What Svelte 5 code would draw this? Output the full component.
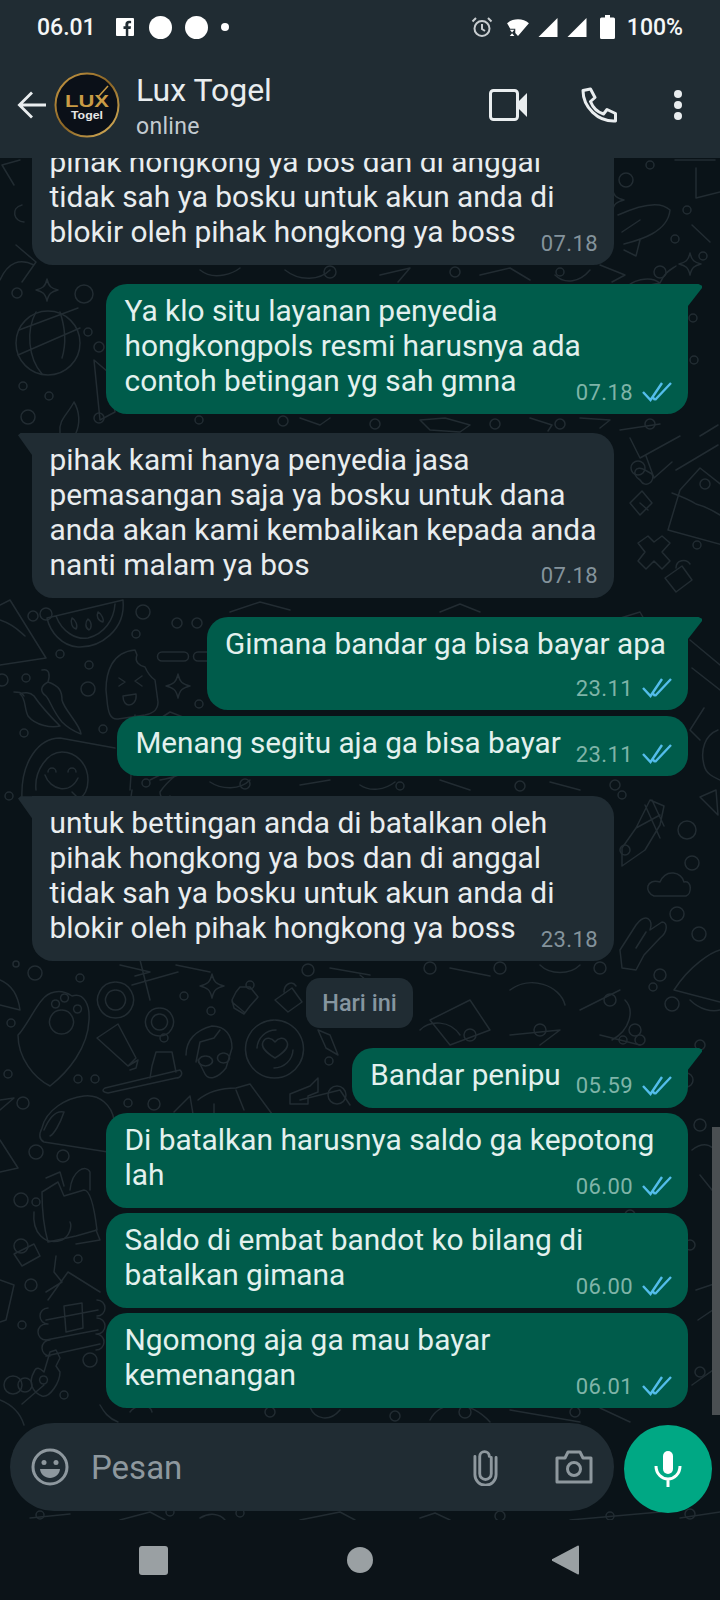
<script>
  const messages = [
    { who: 'in', tail: true, meta: 'stack', cut: true, time: '07.18', text: 'pihak hongkong ya bos dan di anggal\ntidak sah ya bosku untuk akun anda di\nblokir oleh pihak hongkong ya boss' },
    { who: 'out', tail: true, meta: 'stack', time: '07.18', gap: 'g19', text: 'Ya klo situ layanan penyedia\nhongkongpols resmi harusnya ada\ncontoh betingan yg sah gmna' },
    { who: 'in', tail: true, meta: 'stack', time: '07.18', gap: 'g19', text: 'pihak kami hanya penyedia jasa\npemasangan saja ya bosku untuk dana\nanda akan kami kembalikan kepada anda\nnanti malam ya bos' },
    { who: 'out', tail: true, meta: 'below', time: '23.11', gap: 'g19', text: 'Gimana bandar ga bisa bayar apa' },
    { who: 'out', meta: 'inline', time: '23.11', gap: 'g6', text: 'Menang segitu aja ga bisa bayar' },
    { who: 'in', tail: true, meta: 'stack', time: '23.18', gap: 'g20', text: 'untuk bettingan anda di batalkan oleh\npihak hongkong ya bos dan di anggal\ntidak sah ya bosku untuk akun anda di\nblokir oleh pihak hongkong ya boss' },
    { chip: 'Hari ini' },
    { who: 'out', tail: true, meta: 'inline', time: '05.59', gap: 'g20', text: 'Bandar penipu' },
    { who: 'out', meta: 'stack', time: '06.00', gap: 'g5', text: 'Di batalkan harusnya saldo ga kepotong\nlah' },
    { who: 'out', meta: 'stack', time: '06.00', gap: 'g5', text: 'Saldo di embat bandot ko bilang di\nbatalkan gimana' },
    { who: 'out', meta: 'stack', time: '06.01', gap: 'g5', text: 'Ngomong aja ga mau bayar\nkemenangan' }
  ];

  const star = (x, y, r) =>
    `M${x} ${y - r}C${x + r * 0.15} ${y - r * 0.3} ${x + r * 0.4} ${y - r * 0.15} ${x + r} ${y}C${x + r * 0.4} ${y + r * 0.15} ${x + r * 0.15} ${y + r * 0.3} ${x} ${y + r}C${x - r * 0.15} ${y + r * 0.3} ${x - r * 0.4} ${y + r * 0.15} ${x - r} ${y}C${x - r * 0.4} ${y - r * 0.15} ${x - r * 0.15} ${y - r * 0.3} ${x} ${y - r}Z`;

  const rings = [
    [17,293,5],[84,294,9],[88,332,4],[99,347,5],[23,386,4],[49,396,4],[28,417,7],[199,420,4],[283,421,5],[99,418,5],
    [46,614,6],[33,616,5],[143,612,7],[136,634,4],[60,654,4],[89,665,4],[88,689,7],[26,678,4],[2,680,6],[177,623,5],[197,623,5],[199,704,4],[103,729,4],[24,733,4],[146,783,4],[9,796,4],
    [16,964,3],[35,973,7],[80,978,4],[11,1023,4],[184,996,4],[211,1011,4],[164,1038,4],[95,1079,4],[8,1074,4],[78,1079,4],[23,1103,6],[128,1103,4],[154,1104,6],[36,1152,7],[63,1156,6],[36,1202,4],[21,1200,7],[21,1246,7],[31,1285,6],[78,1259,4],[22,1325,4],[25,1385,7],[90,1360,7],[64,1395,4],[13,1385,9],[112,1360,4],[329,1061,4],[337,1095,9],
    [626,180,7],[650,165,4],[687,210,4],[675,239,4],[703,256,4],[693,318,4],[694,360,4],[697,545,4],
    [638,468,7],[705,484,5],[622,795,4],[687,830,9],[692,863,7],[677,914,7],[699,934,7],[653,987,4],[672,1004,7],[625,850,5],
    [640,1040,5],[700,1045,5],[686,1080,7],[650,1090,6],[623,1040,4],[700,1125,6],[655,1165,4],[630,1215,5],[690,1245,5],[660,1330,4],[700,1372,5],[640,1400,4],[575,1412,5],[465,1412,6],[395,1416,5],[270,1412,5],
    [240,1513,4],[170,1512,4],[40,1515,4],[500,1516,5],[610,1516,4],[690,1514,5],
    [330,272,6],[455,272,5],[560,272,4],[660,272,6],[375,424,5],[495,424,5],[560,424,5],[650,424,5],
    [245,784,5],[400,786,4],[520,786,5],[615,785,5],[308,970,6],[430,968,6],[500,968,6],[600,968,6],[660,975,6],[610,1000,6],[470,1035,6],[540,1030,6],[635,1030,6],[250,985,4]
  ];

  const stars = [[47,290,11],[178,686,12],[212,986,12],[612,200,12],[690,264,11]].map((s) => star(s[0], s[1], s[2]));

  const doodles = [
    // globe
    'M19 330L78 308M18 355L80 328M36 312C26 330 28 358 42 374M60 312C66 330 66 345 62 358',
    // flag and flame by the first bubbles
    'M94 360L100 420L115 412L108 372Z',
    'M20 160L2 165L14 185',
    'M22 205C10 208 14 222 24 222',
    'M34 265C20 258 8 262 0 280M16 245L36 262L22 282',
    'M60 433C58 420 68 414 74 402C80 412 80 424 76 433',
    // fish, magnifier
    'M618 215C640 205 660 200 670 210C668 232 640 240 624 244M622 232L640 220M624 250L636 256L640 240',
    'M692 225L710 242',
    'M675 160L715 160M696 168L696 198L720 192',
    'M625 290C630 280 650 275 660 283C665 272 670 270 676 266M625 290L660 283',
    // watermelon
    'M47 618L123 600C126 630 100 648 78 647C62 646 50 632 47 618ZM56 616C62 632 76 640 88 638C104 634 114 620 115 604',
    'M72 618C76 620 78 626 76 629C72 628 70 622 72 618ZM88 619C92 622 92 628 89 630C85 628 85 622 88 619ZM98 612C102 614 104 620 103 622C98 621 96 616 98 612Z',
    'M0 605L10 600L46 658L0 665M0 620C15 625 20 632 25 636',
    // popsicle
    'M106 690C106 672 112 652 135 650L137 655C134 662 140 666 145 667C148 674 152 678 155 680L158 702C158 712 150 714 145 715L118 719C110 720 108 712 107 700Z',
    'M119 678L125 682L119 686M142 676L135 681L142 686M123 696L136 694C137 702 132 705 129 705C126 705 123 702 123 696Z',
    'M162 652L184 652A4.5 4.5 0 0 1 184 661L162 661A4.5 4.5 0 0 1 162 652ZM198 652L210 652M198 661L210 661M198 652A4.5 4.5 0 0 0 198 661',
    // chilies
    'M20 694C26 698 24 708 28 716C36 726 52 728 60 726C50 716 38 702 34 696C30 692 24 692 20 694Z',
    'M14 692C18 692 22 692 24 696M42 670C50 668 50 676 48 682C40 686 40 692 46 696C50 700 52 710 62 722C70 730 76 732 81 734C80 724 64 710 62 700C62 692 60 686 48 682',
    // smiley
    'M22 800C20 760 40 738 60 738L115 748',
    'M36 790C34 770 48 752 62 752C76 752 88 764 88 780C88 790 84 796 80 798',
    'M45 775C50 790 70 795 78 778M48 772A4 4 0 0 1 56 772M68 772A4 4 0 0 1 76 772M72 792L80 800',
    'M132 790L130 804M160 780C172 778 184 774 188 768C182 770 168 780 160 792C160 798 164 800 170 796',
    // paw shield
    'M18 1035C24 1030 36 1006 42 1000C48 992 60 988 72 996C84 992 90 1005 89 1020C88 1048 68 1072 50 1086C34 1078 18 1058 18 1035Z',
    'M62 1010A12 12 0 1 1 61 1010',
    'M56 1000A4 4 0 1 1 55 1000M65 994A4 4 0 1 1 64 994M78 1005A4 4 0 1 1 77 1005',
    'M0 980C12 985 18 995 20 1010L0 1005',
    // scissors
    'M116 982A18 18 0 1 1 115 982M116 990A10 10 0 1 1 115 990M132 985L178 972M140 960L150 1000M160 1008A14 14 0 1 1 159 1008M160 1014A8 8 0 1 1 159 1014',
    // plus, lock
    'M240 987L250 987L258 997L250 1006L244 1014L234 1008L232 1000L236 992Z M232 1002L244 1012',
    'M275 1000L292 988L302 1002L288 1012ZM284 992C284 984 292 980 296 986',
    // tube, brush
    'M97 1038L118 1024L136 1058L128 1066ZM128 1066L138 1060L136 1068L130 1070',
    'M105 1088L180 1070C184 1074 180 1078 176 1078L108 1093C102 1092 102 1090 105 1088ZM150 1078L152 1066L156 1052L172 1052L176 1072',
    // person
    'M198 1100C210 1090 225 1088 236 1088L250 1084L272 1114M186 1055C186 1040 196 1030 212 1026C226 1026 232 1036 232 1048L226 1068C218 1078 208 1082 204 1072L198 1060',
    'M196 1062L200 1042L214 1038L220 1030M206 1056A7 5 0 1 1 205 1056M224 1053A6 5 0 1 1 223 1053M236 1090L244 1110M214 1104L214 1120M174 1112L190 1096M190 1096L194 1120',
    // heart coffee
    'M275 1020A29 29 0 1 1 274 1020M257 1048A19 19 0 0 1 276 1030M293 1050A19 19 0 0 1 274 1068',
    'M275 1058C265 1052 261 1046 263 1042C266 1036 272 1038 275 1042C278 1038 284 1036 287 1042C289 1046 285 1052 275 1058Z',
    'M290 1094L310 1086L318 1078L318 1092L308 1096L308 1104L290 1104Z',
    'M318 1030L330 1035L338 1055L326 1048Z',
    // taco
    'M42 1128C46 1110 66 1098 84 1096C100 1094 112 1106 114 1120M42 1128C38 1136 40 1140 44 1142L108 1152',
    'M44 1130C50 1116 56 1110 64 1112C60 1124 54 1134 50 1136',
    'M0 1140L18 1168L0 1172M0 1100L14 1098L0 1110',
    // grocery bag
    'M42 1192L58 1182L64 1196L84 1190C90 1190 94 1205 97 1230L76 1236L48 1242C44 1228 42 1206 42 1192ZM46 1178L60 1172L64 1186M70 1190C72 1170 86 1164 90 1172L90 1190',
    'M34 1212C32 1232 44 1246 62 1240C70 1236 72 1226 70 1222M96 1230L100 1240L76 1244',
    // folder, log house
    'M14 1254L34 1244L40 1256L22 1266Z',
    'M56 1256L54 1272L62 1282L46 1292M48 1300L68 1272L100 1292M46 1320L98 1310M46 1340L98 1330M46 1356L100 1344M64 1306L82 1303L83 1328L66 1332Z',
    'M48 1308A8 8 0 1 0 48 1324M46 1324A8 8 0 1 0 46 1340M50 1340A8 8 0 1 0 50 1356M97 1300A8 8 0 1 1 97 1316M97 1318A8 8 0 1 1 97 1334M96 1334A8 8 0 1 1 96 1350',
    'M0 1280L14 1285L6 1320L0 1322',
    // key
    'M44 1372L50 1352L56 1350L60 1358L56 1366L60 1372C60 1382 50 1398 42 1396C32 1392 28 1382 34 1372C36 1366 40 1368 44 1372ZM44 1376A4 4 0 1 1 43 1376M44 1385L22 1404',
    'M0 1400C10 1404 20 1412 24 1425',
    'M100 1405C104 1412 108 1418 118 1422M130 1412C134 1406 150 1402 152 1412',
    // around the composer
    'M310 1407C315 1420 330 1422 340 1410M430 1420C440 1400 470 1400 490 1422M510 1410L580 1422M600 1408L630 1422',
    'M30 1518L70 1514M120 1520L150 1512L165 1520M200 1518C210 1512 220 1514 225 1520M300 1520L340 1512L355 1520M420 1518L435 1513L450 1520M570 1520L660 1512M680 1518L720 1512',
    // house on the right
    'M676 470L718 445M680 490L668 530L726 546L728 490L700 468ZM672 493C680 496 690 500 696 504C704 506 712 510 720 515',
    'M620 430L660 424M630 438L640 458L680 436M700 436L718 425M646 456L654 478L672 462',
    'M645 470C636 464 630 474 640 480C646 490 656 480 652 474Z',
    // heart corner, cross, lock
    'M630 503L642 491L652 503L640 515ZM640 503L648 510',
    'M648 536L654 542L662 536L670 543L662 552L670 561L662 569L654 561L646 569L638 561L645 552L638 543Z',
    'M665 578L682 566L692 580L676 592ZM676 568C676 560 686 558 690 564',
    'M614 620L640 612L648 626L630 636L614 636',
    // wing tent
    'M690 640L720 665M692 668L720 690M704 708L690 730L700 740',
    'M718 730C705 735 700 750 704 765C706 775 716 778 720 780',
    // corn
    'M622 848L636 828L650 800L664 806L660 825L645 850L622 866ZM636 828L660 815M645 805L660 838M652 800L664 826',
    'M700 797L718 815L716 790Z',
    // cloud
    'M654 896C644 892 646 878 660 882C666 868 682 872 684 882C692 880 692 894 686 896Z',
    // hand
    'M620 950L636 925C646 912 654 920 650 930L662 922C668 922 668 932 660 938L644 955L636 970L622 968ZM646 932L636 948',
    'M674 990C690 965 712 952 720 950M674 990L720 1002M690 1000C700 1010 712 1012 720 1010',
    'M625 1000C635 1010 630 1030 612 1040',
    // under bubbles
    'M200 270C215 282 235 272 240 268M285 270C300 282 320 280 330 270M380 275L410 268L398 282M480 275L510 268L530 280M555 275C565 285 580 282 590 270',
    'M600 265L625 275L612 282',
    'M300 418L320 425L330 418M420 420L445 418L470 425L460 432L430 430ZM530 418L552 425L548 431M580 418L610 420L600 428',
    'M230 612L260 602L290 610M440 612L460 604L480 612',
    'M150 725L170 712L196 722M150 780L170 770L180 775',
    'M135 715L130 790M210 782C222 790 240 790 250 780',
    'M300 785L330 780M360 785C370 792 385 790 395 782M440 780L470 790M550 782L580 790',
    'M120 965L150 972L135 976M176 965L210 972M330 968L370 975M450 968L490 976M540 965C550 975 570 975 580 965',
    'M360 975L390 1000M430 1020L470 1000L490 1030L450 1045ZM510 990C530 975 560 985 565 1005M580 1010L620 990',
    'M300 1100L340 1090L350 1105',
    'M420 1030C430 1020 450 1020 460 1035M510 1035L560 1030L540 1045M600 1035L640 1045',
    'M692 1150C705 1140 715 1145 720 1160M700 1175L720 1200M696 1290L720 1282',
    'M698 1320L720 1305M692 1385L720 1365'
  ];
</script>

<div class="phone">
  <div class="top">
    <div class="status">
      <span class="clock">06.01</span>
      <svg class="fb" viewBox="0 0 18 18"><path fill="#fff" d="M1 0h16a1 1 0 0 1 1 1v16a1 1 0 0 1-1 1h-4.700v-7h2.300l.4-2.700h-2.700V6.600c0-.8.3-1.300 1.400-1.300h1.400V2.900c-.7-.1-1.400-.2-2.200-.2-2.100 0-3.500 1.300-3.500 3.600v2H7.500V11h2.300v7H1a1 1 0 0 1-1-1V1a1 1 0 0 1 1-1z"/></svg>
      <i class="blob"></i>
      <i class="blob"></i>
      <i class="dot"></i>
      <span class="spring"></span>
      <svg class="alarm" viewBox="0 0 22 22" fill="none" stroke="#c8cdd0" stroke-width="2"><circle cx="11" cy="12.500" r="7.500"/><path d="M11 8v5l3 2M1.500 5.500L5 2M20.500 5.500L17 2"/></svg>
      <svg class="wifi" viewBox="0 0 26 22"><path fill="#fff" d="M1 7C7 1 19 1 25 7L13 21 10 17.500V13H4.500z"/><path fill="#fff" d="M4 14h5l-2.500 3zM4 21h5l-2.500-3z"/></svg>
      <svg class="sig" viewBox="0 0 20 20"><path fill="#fff" d="M20 0v20H0z"/></svg>
      <svg class="sig" viewBox="0 0 20 20"><path fill="#fff" d="M20 0v20H0z"/></svg>
      <svg class="batt" viewBox="0 0 15 24"><path fill="#fff" d="M5 0h5v2.500h3.500a1.500 1.500 0 0 1 1.500 1.500v18.500a1.500 1.500 0 0 1-1.500 1.500h-12A1.500 1.500 0 0 1 0 22.500V4a1.500 1.500 0 0 1 1.500-1.500H5z"/></svg>
      <span class="pct">100%</span>
    </div>
    <div class="appbar">
      <svg class="back" viewBox="0 0 30 30" fill="none" stroke="#e9edef" stroke-width="3"><path d="M30 15H2M15 1.500L1.500 15 15 28.500"/></svg>
      <svg class="avatar" viewBox="0 0 66 66">
        <defs>
          <linearGradient id="gold" x1="0" y1="0" x2="1" y2="1">
            <stop offset="0" stop-color="#c89a45"/><stop offset="0.5" stop-color="#8a6424"/><stop offset="1" stop-color="#e0b860"/>
          </linearGradient>
        </defs>
        <circle cx="33" cy="33" r="31.500" fill="#0b1018" stroke="url(#gold)" stroke-width="2"/>
        <path d="M45 24L54 14" stroke="#c99b45" stroke-width="1.500" fill="none"/>
        <text x="33" y="35" text-anchor="middle" textLength="44" lengthAdjust="spacingAndGlyphs" class="lux">LUX</text>
        <text x="33" y="47" text-anchor="middle" textLength="32" lengthAdjust="spacingAndGlyphs" class="togel">Togel</text>
      </svg>
      <div class="who">
        <div class="name">Lux Togel</div>
        <div class="online">online</div>
      </div>
      <svg class="video" viewBox="0 0 38 32" fill="none"><rect x="1.500" y="1.500" width="27" height="29" rx="3" stroke="#e9edef" stroke-width="3"/><path fill="#e9edef" d="M30 12L38 4V28L30 20z"/></svg>
      <svg class="call" viewBox="0 0 36 36" fill="none" stroke="#e9edef" stroke-width="3" stroke-linejoin="round"><path d="M2 3.500L9.500 2 14 10.500 9.500 14.500C12 21 16 25 22.500 27L26 22.500 34.500 26.500V34C17 35 2 20 2 3.500Z"/></svg>
      <div class="more"><i></i><i></i><i></i></div>
    </div>
  </div>

  <div class="chat">
    <svg class="wall" viewBox="0 0 720 1362" fill="none" stroke="#222c32" stroke-width="1.500" stroke-linecap="round" stroke-linejoin="round">
      <g transform="translate(0 -158)">
        <circle cx="48" cy="343" r="32"/>
        {#each rings as r}<circle cx={r[0]} cy={r[1]} r={r[2]}/>{/each}
        {#each stars as d}<path {d}/>{/each}
        {#each doodles as d}<path {d}/>{/each}
      </g>
    </svg>

    <div class="list">
      {#each messages as m}
        {#if m.chip}
          <div class="chip">{m.chip}</div>
        {:else}
          <div class="bubble {m.who} {m.meta} {m.gap ?? ''}" class:tail={m.tail} class:cut={m.cut}>
            <div class="text">
              {#each m.text.split('\n') as line}<div class="line">{line}</div>{/each}
            </div>
            <div class="meta">
              <span>{m.time}</span>
              {#if m.who === 'out'}
                <svg class="ticks" viewBox="0 0 30 20" fill="none" stroke="#53bdeb" stroke-width="2.400"><path d="M1 10L8.500 18 20 1M13 18L29 1M10.500 15L13 18"/></svg>
              {/if}
            </div>
          </div>
        {/if}
      {/each}
    </div>

    <div class="scroll"></div>

    <div class="composer">
      <div class="field">
        <svg class="emoji" viewBox="0 0 38 38" fill="none" stroke="#8e989e" stroke-width="3"><circle cx="19" cy="19" r="17"/><circle cx="13" cy="14.500" r="2.500" fill="#8e989e" stroke="none"/><circle cx="25" cy="14.500" r="2.500" fill="#8e989e" stroke="none"/><path fill="#8e989e" stroke="none" d="M9 21h20c-.5 5.500-5 9-10 9S9.500 26.500 9 21z"/></svg>
        <span class="ph">Pesan</span>
        <span class="spring"></span>
        <svg class="clip" viewBox="0 0 26 38" fill="none" stroke="#8e989e" stroke-width="3" stroke-linecap="round"><path d="M19 9V26a6 6 0 0 1-12 0V8a5 5 0 0 1 10 0M24 9V27a11 11 0 0 1-22 0V8"/></svg>
        <svg class="cam" viewBox="0 0 38 34" fill="none" stroke="#8e989e" stroke-width="3" stroke-linejoin="round"><path d="M2 8h8l3-6h12l3 6h8v24H2z"/><circle cx="19" cy="19" r="6.500"/></svg>
      </div>
      <div class="mic">
        <svg viewBox="0 0 28 36" fill="none" stroke="#fff"><rect x="9" y="0" width="10" height="23" rx="5" fill="#fff" stroke="none"/><path stroke-width="3" d="M2 15C2 23 8 28 14 28S26 23 26 15M14 27V36"/></svg>
      </div>
    </div>
  </div>

  <div class="nav">
    <i class="square"></i>
    <i class="round"></i>
    <svg class="tri" viewBox="0 0 27 30"><path fill="#9aa0a3" d="M26 0.500a1 1 0 0 1 1 1v27a1 1 0 0 1-1.500.8L0.500 16a1 1 0 0 1 0-2z"/></svg>
  </div>
</div>

<style>
  :global(body) { margin: 0; background: #0b141a; }
  .phone {
    width: 720px;
    height: 1600px;
    display: flex;
    flex-direction: column;
    overflow: hidden;
    font-family: Roboto, "Liberation Sans", sans-serif;
    color: #e9edef;
  }
  .top { position: relative; z-index: 1; background: #202c33; height: 158px; flex: none; }
  .status {
    height: 54px;
    padding: 0 37px 0 37px;
    display: flex;
    align-items: center;
    box-sizing: border-box;
  }
  .clock, .pct { font-size: 23px; font-weight: 500; color: #f4f6f7; }
  .fb { width: 18px; height: 18px; margin-left: 20px; }
  .blob { width: 23px; height: 23px; border-radius: 50%; background: #fff; margin-left: 15px; }
  .blob + .blob { margin-left: 13px; }
  .dot { width: 8px; height: 8px; border-radius: 50%; background: #fff; margin-left: 13px; }
  .spring { flex: 1; }
  .alarm { width: 22px; height: 22px; }
  .wifi { width: 24px; height: 20px; margin-left: 13px; }
  .sig { width: 20px; height: 19px; margin-left: 8px; }
  .sig + .sig { margin-left: 9px; }
  .batt { width: 15px; height: 24px; margin-left: 13px; }
  .pct { margin-left: 12px; }

  .appbar { height: 104px; display: flex; align-items: center; padding-bottom: 2px; box-sizing: border-box; }
  .back { width: 30px; height: 28px; margin-left: 17px; flex: none; }
  .avatar { width: 66px; height: 66px; margin-left: 7px; flex: none; }
  .lux { font: 900 16px "Liberation Sans", sans-serif; fill: #c99b45; }
  .togel { font: 700 11px "Liberation Sans", sans-serif; fill: #e6e6e6; }
  .who { margin: 4px 0 0 16px; flex: 1; }
  .name { font-size: 32px; line-height: 36px; color: #e9edef; }
  .online { font-size: 23px; line-height: 30px; margin-top: 4px; color: #c3cbd0; letter-spacing: 0.3px; }
  .video { width: 38px; height: 32px; }
  .call { width: 36px; height: 36px; margin-left: 54px; }
  .more { display: flex; flex-direction: column; gap: 3px; margin: 0 38px 0 57px; }
  .more i { width: 8px; height: 8px; border-radius: 50%; background: #e9edef; }

  .chat { flex: 1; min-height: 0; position: relative; overflow: hidden; background: #0a1318; }
  .wall { position: absolute; inset: 0; width: 720px; height: 1362px; }
  .list {
    position: relative;
    display: flex;
    flex-direction: column;
    align-items: flex-end;
    padding-right: 32px;
  }
  .bubble {
    position: relative;
    box-sizing: border-box;
    padding: 10px 16px 10px 18.500px;
    border-radius: 21px;
    max-width: 582px;
  }
  .in { align-self: flex-start; margin-left: 32px; width: 582px; padding-left: 17.500px; background: #202c33; }
  .out { background: #005c4b; }
  .tail.out { border-top-right-radius: 0; }
  .tail.in { border-top-left-radius: 0; }
  .tail::before {
    content: '';
    position: absolute;
    top: 0;
    width: 14px;
    height: 22px;
    background: inherit;
  }
  .tail.out::before { left: 100%; clip-path: polygon(0 0, 75% 0, 100% 8%, 100% 18%, 0 100%); }
  .tail.in::before { right: 100%; clip-path: polygon(100% 0, 18% 0, 0 10%, 100% 100%); }
  .cut { margin-top: -23px; }
  .g5 { margin-top: 5px; }
  .g6 { margin-top: 6px; }
  .g19 { margin-top: 19px; }
  .g20 { margin-top: 20px; }
  .stack.out { width: 582px; }
  .text {
    font-size: 29.880px;
    line-height: 34.900px;
    padding-bottom: 5.300px;
  }
  .inline .text, .below .text { font-size: 29.700px; }
  .line { width: fit-content; white-space: pre; }
  .out .text { color: #e3f1ee; }
  .meta {
    display: flex;
    align-items: center;
    justify-content: flex-end;
    gap: 9px;
    height: 24px;
    font-size: 22px;
    letter-spacing: 0.4px;
    color: #84939c;
  }
  .out .meta { color: #7fb4a8; }
  .ticks { width: 30px; height: 20px; flex: none; }
  .stack .meta { margin-top: -24px; }
  .below { padding-right: 22px; }
  .below .meta { margin: 9px -6px 0 0; }
  .inline { display: flex; gap: 15px; }
  .inline .meta { align-self: flex-end; }
  .chip {
    align-self: flex-start;
    margin: 16.500px 0 0 306px;
    width: 107px;
    height: 50px;
    box-sizing: border-box;
    border-radius: 14px;
    background: #202c33;
    color: #8696a0;
    font-size: 23.500px;
    font-weight: 500;
    display: flex;
    align-items: center;
    justify-content: center;
  }
  .scroll { position: absolute; right: 0; top: 969px; width: 8px; height: 288px; background: #4a4f52; }

  .composer {
    position: absolute;
    left: 10px;
    right: 8px;
    bottom: 7px;
    display: flex;
    align-items: flex-end;
    gap: 10px;
  }
  .field {
    flex: 1;
    height: 88px;
    margin-bottom: 2px;
    border-radius: 44px;
    background: #202c33;
    display: flex;
    align-items: center;
    padding: 0 21px;
    box-sizing: border-box;
  }
  .emoji { width: 38px; height: 38px; flex: none; }
  .ph { font-size: 33px; color: #8e989e; margin-left: 22px; }
  .clip { width: 25px; height: 38px; }
  .cam { width: 38px; height: 34px; margin-left: 57px; }
  .mic {
    width: 88px;
    height: 88px;
    flex: none;
    border-radius: 50%;
    background: #00a884;
    display: flex;
    align-items: center;
    justify-content: center;
  }
  .mic svg { width: 28px; height: 36px; }

  .nav {
    height: 80px;
    flex: none;
    background: #0c1318;
    display: flex;
    align-items: center;
    padding-left: 139px;
  }
  .square { width: 29px; height: 29px; border-radius: 3px; background: #9aa0a3; }
  .round { width: 26px; height: 26px; border-radius: 50%; background: #9aa0a3; margin-left: 179px; }
  .tri { width: 27px; height: 30px; margin-left: 179px; }
</style>
